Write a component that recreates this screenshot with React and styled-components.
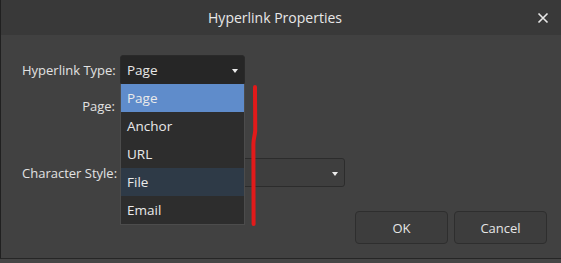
import React from "react";
import styled, { createGlobalStyle } from "styled-components";

const Global = createGlobalStyle`
  html, body { margin: 0; padding: 0; background: #454545; }
  body { font-family: "Open Sans", "Noto Sans", sans-serif; }
  #root { width: 561px; height: 263px; overflow: hidden; }
`;

const Dialog = styled.div`
  position: relative;
  width: 561px;
  height: 259px;
  box-sizing: border-box;
  background: #414141;
  border-left: 1px solid #202020;
  border-bottom: 1px solid #262626;
  display: flex;
  flex-direction: column;
  color: #e4e4e4;
`;

const TitleBar = styled.div`
  height: 35px;
  flex: none;
  background: #393939;
  display: grid;
  grid-template-columns: 1fr auto 1fr;
  align-items: center;
  padding: 0 12px 0 0;
`;

const Title = styled.div`
  grid-column: 2;
  font-size: 14px;
  color: #e8e8e8;
`;

const Close = styled.button`
  grid-column: 3;
  justify-self: end;
  background: none;
  border: 0;
  padding: 0;
  width: 12px;
  height: 12px;
  display: flex;
  color: #e6e6e6;
`;

const Body = styled.div`
  flex: 1;
  display: flex;
  flex-direction: column;
  padding: 20px 14px 0 21px;
`;

const Row = styled.div`
  display: flex;
  align-items: center;
  gap: 5px;
  margin-top: ${(p) => p.$mt || 0}px;
`;

const Label = styled.div`
  width: 93px;
  text-align: right;
  font-size: 13px;
  white-space: nowrap;
  color: #e2e2e2;
`;

const SelectBox = styled.div`
  position: relative;
  box-sizing: border-box;
  width: ${(p) => p.$w}px;
  height: ${(p) => p.$h || 29}px;
  border-radius: 3px;
  background: ${(p) => (p.$dark ? "#262626" : "#3e3e3e")};
  border: 1px solid ${(p) => (p.$dark ? "#2a2a2a" : "#2c2c2c")};
  display: flex;
  align-items: center;
  padding: 0 6px 0 6px;
  font-size: 13.5px;
  color: #e6e6e6;
`;

const Value = styled.span`
  flex: 1;
`;

const Arrow = styled.span`
  width: 0;
  height: 0;
  border-left: 3.5px solid transparent;
  border-right: 3.5px solid transparent;
  border-top: 4px solid #ececec;
  margin-top: 2px;
`;

const List = styled.ul`
  position: absolute;
  left: -1px;
  top: 100%;
  margin: 0;
  padding: 0;
  list-style: none;
  width: 125px;
  box-sizing: border-box;
  background: #2d2d2d;
  border: 1px solid #4c4c4c;
  border-top: 0;
  z-index: 5;
`;

const Item = styled.li`
  height: 28px;
  display: flex;
  align-items: center;
  padding-left: 6px;
  font-size: 13.5px;
  color: #eaeaea;
  background: ${(p) =>
    p.$state === "sel" ? "#5f8ccb" : p.$state === "hover" ? "#2e3a47" : "transparent"};
`;

const Buttons = styled.div`
  display: flex;
  justify-content: flex-end;
  gap: 6px;
  margin-top: 24px;
`;

const Button = styled.button`
  width: 93px;
  height: 33px;
  box-sizing: border-box;
  border-radius: 4px;
  background: #3d3d3d;
  border: 1px solid #2e2e2e;
  color: #e6e6e6;
  font-family: inherit;
  font-size: 13px;
`;

const Mark = styled.svg`
  position: absolute;
  left: 248px;
  top: 84px;
  pointer-events: none;
  z-index: 6;
`;

const items = [
  { t: "Page", s: "sel" },
  { t: "Anchor" },
  { t: "URL" },
  { t: "File", s: "hover" },
  { t: "Email" },
];

export default function App() {
  return (
    <>
      <Global />
      <Dialog>
        <TitleBar>
          <Title>Hyperlink Properties</Title>
          <Close aria-label="Close">
            <svg width="12" height="12" viewBox="0 0 12 12">
              <path d="M1.5 1.5 L10.5 10.5 M10.5 1.5 L1.5 10.5" stroke="#e8e8e8" strokeWidth="1.6" />
            </svg>
          </Close>
        </TitleBar>
        <Body>
          <Row>
            <Label>Hyperlink Type:</Label>
            <SelectBox $w={125} $h={30} $dark>
              <Value>Page</Value>
              <Arrow />
              <List>
                {items.map((i) => (
                  <Item key={i.t} $state={i.s}>
                    {i.t}
                  </Item>
                ))}
              </List>
            </SelectBox>
          </Row>
          <Row $mt={7}>
            <Label>Page:</Label>
            <SelectBox $w={125} $h={28} />
          </Row>
          <Row $mt={38}>
            <Label>Character Style:</Label>
            <SelectBox $w={225} $h={29}>
              <Value />
              <Arrow />
            </SelectBox>
          </Row>
          <Buttons>
            <Button>OK</Button>
            <Button>Cancel</Button>
          </Buttons>
        </Body>
        <Mark width="12" height="146" viewBox="0 0 12 146">
          <path
            d="M6 3 C6 20 6.3 35 6.2 47 C5.8 52 4.5 54 4.4 60 C4.3 90 4.5 120 4.6 140"
            stroke="#e21a1a"
            strokeWidth="4"
            fill="none"
            strokeLinecap="round"
          />
        </Mark>
      </Dialog>
    </>
  );
}
